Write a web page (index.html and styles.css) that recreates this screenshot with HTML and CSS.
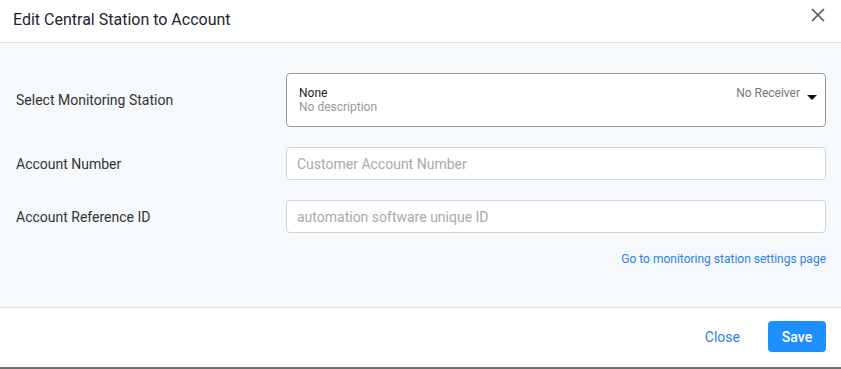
FILE: index.html
```html
<!DOCTYPE html>
<html lang="en">
<head>
  <meta charset="UTF-8" />
  <title>Edit Central Station to Account</title>
  <link rel="stylesheet" href="styles.css">
</head>
<body>

  <div class="modal">
    <div class="modal-header">
      <h4>Edit Central Station to Account</h4>
      <button class="close-x" aria-label="Close">
        <svg width="14" height="14" viewBox="0 0 14 14"><path d="M1 1L13 13M13 1L1 13" stroke="#555" stroke-width="1.6" fill="none"/></svg>
      </button>
    </div>

    <div class="modal-body">
      <div class="row">
        <label>Select Monitoring Station</label>
        <div class="select-box">
          <div class="select-main">
            <div class="select-title">None</div>
            <div class="select-desc">No description</div>
          </div>
          <div class="select-side">No Receiver</div>
          <span class="caret"></span>
        </div>
      </div>

      <div class="row">
        <label>Account Number</label>
        <input type="text" placeholder="Customer Account Number" />
      </div>

      <div class="row">
        <label>Account Reference ID</label>
        <input type="text" placeholder="automation software unique ID" />
      </div>

      <div class="link-row">
        <a href="#">Go to monitoring station settings page</a>
      </div>
    </div>

    <div class="modal-footer">
      <button class="btn-link">Close</button>
      <button class="btn-save">Save</button>
    </div>
  </div>

</body>
</html>
```

FILE: styles.css
```css
body {
  margin: 0;
  background-color: #6b6e6b;
  font-family: Roboto, "Liberation Sans", Arial, sans-serif;
  color: #212529;
}
.modal {
  background-color: white;
  height: 367px;
  display: flex;
  flex-direction: column;
}
.modal-header {
  height: 42px;
  border-bottom: 1px solid #dee2e6;
  display: flex;
  align-items: center;
  justify-content: space-between;
  padding: 0 16px 0 13px;
}
.modal-header h4 {
  margin: 0;
  font-size: 16px;
  font-weight: 400;
  color: #1d2530;
  position: relative;
  top: -2px;
}
.close-x {
  background: none;
  border: none;
  padding: 0;
  cursor: pointer;
  display: flex;
  position: relative;
  top: -6px;
}
.modal-body {
  background-color: #f5f9fc;
  height: 264px;
  box-sizing: border-box;
  padding: 30px 15px 0 16px;
}
.row {
  display: flex;
  align-items: center;
  margin-bottom: 20px;
}
.row label {
  width: 270px;
  font-size: 14px;
  color: #333;
}
.select-box {
  flex: 1;
  height: 54px;
  box-sizing: border-box;
  border: 1px solid #999;
  border-radius: 4px;
  background-color: white;
  display: flex;
  padding: 12px 8px 0 12px;
}
.select-main {
  flex: 1;
}
.select-title {
  font-size: 12px;
  color: #222;
  line-height: 14px;
}
.select-desc {
  font-size: 12px;
  color: #9a9a9a;
  line-height: 14px;
}
.select-side {
  font-size: 12px;
  color: #777;
  line-height: 14px;
}
.caret {
  width: 0;
  height: 0;
  border-left: 5px solid transparent;
  border-right: 5px solid transparent;
  border-top: 5px solid #111;
  margin: 9px 0 0 7px;
}
input {
  flex: 1;
  height: 33px;
  box-sizing: border-box;
  border: 1px solid #ced4da;
  border-radius: 4px;
  padding: 0 10px;
  font-family: inherit;
  font-size: 14px;
  background-color: white;
}
input::placeholder {
  color: #a9a9a9;
}
.link-row {
  text-align: right;
  margin-top: -5px;
}
.link-row a {
  font-size: 12px;
  color: #2f7fe0;
  text-decoration: none;
}
.modal-footer {
  flex: 1;
  border-top: 1px solid #dee2e6;
  display: flex;
  justify-content: flex-end;
  align-items: center;
  padding: 0 15px 2px 0;
}
.btn-link {
  background: none;
  border: none;
  color: #2f7fe0;
  font-family: inherit;
  font-size: 14px;
  margin-right: 22px;
  cursor: pointer;
}
.btn-save {
  background-color: #1e8fff;
  color: white;
  border: none;
  border-radius: 4px;
  font-family: inherit;
  font-size: 14px;
  font-weight: 500;
  width: 58px;
  height: 31px;
  cursor: pointer;
}
```
